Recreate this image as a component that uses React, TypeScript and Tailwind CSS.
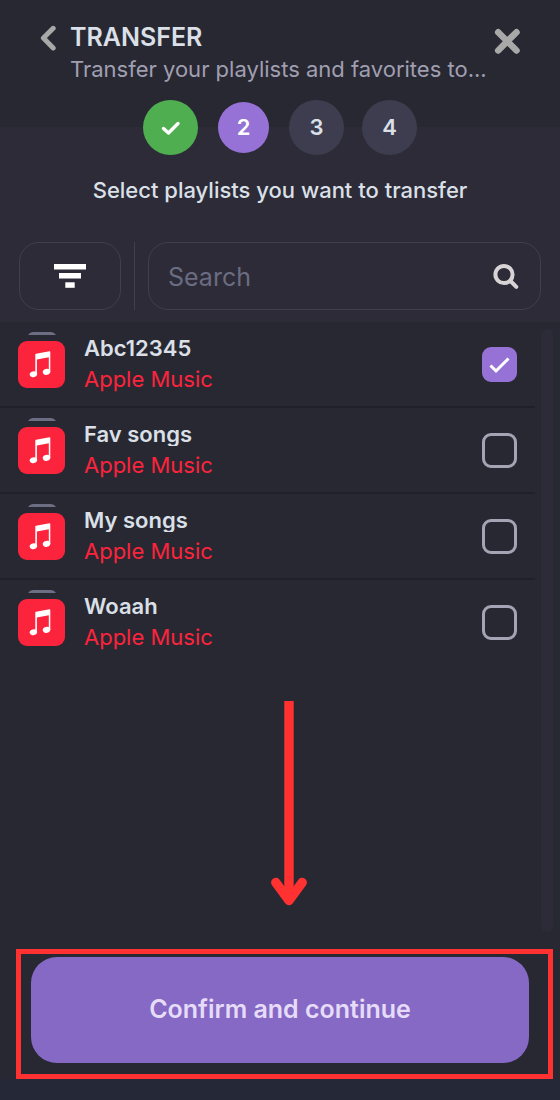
import { useState } from "react";

interface Playlist {
  id: number;
  name: string;
  source: string;
}

const playlists: Playlist[] = [
  { id: 1, name: "Abc12345", source: "Apple Music" },
  { id: 2, name: "Fav songs", source: "Apple Music" },
  { id: 3, name: "My songs", source: "Apple Music" },
  { id: 4, name: "Woaah", source: "Apple Music" },
];

function AppleMusicIcon() {
  return (
    <div className="flex w-[47px] shrink-0 flex-col items-center gap-[6px] pt-[10px]">
      <svg width="28" height="3" viewBox="0 0 28 3" aria-hidden="true">
        <path d="M0 3 Q2 0 5 0 H23 Q26 0 28 3 Z" fill="#6c6e84" />
      </svg>
      <svg width="47" height="47" viewBox="0 0 47 47" aria-hidden="true">
        <rect width="47" height="47" rx="9" fill="#fc243c" />
        <path
          d="M17.3 13.8 Q17.3 13 18.1 12.8 L31.4 10.2 Q32.3 10.1 32.3 11 V31 H30.8 V16.2 L18.9 18.6 V33.4 H17.3 Z"
          fill="#fff"
        />
        <ellipse cx="15.4" cy="33.2" rx="3.8" ry="2.9" transform="rotate(-14 15.4 33.2)" fill="#fff" />
        <ellipse cx="28.5" cy="30.9" rx="3.8" ry="2.9" transform="rotate(-14 28.5 30.9)" fill="#fff" />
      </svg>
    </div>
  );
}

interface PlaylistRowProps {
  playlist: Playlist;
  checked: boolean;
  last: boolean;
  onToggle: () => void;
}

function PlaylistRow({ playlist, checked, last, onToggle }: PlaylistRowProps) {
  return (
    <li className={last ? "h-[85px]" : "h-[86px] border-b-2 border-[#20202a]"}>
      <label className="flex cursor-pointer pr-[18px] pl-[18px]">
        <AppleMusicIcon />
        <div className="ml-[19px] min-w-0 flex-1 pt-[14px] text-[22px] leading-6">
          <p className="overflow-hidden font-semibold text-[#dbe0e8]">{playlist.name}</p>
          <p className="mt-[7px] text-[#fc243c]">{playlist.source}</p>
        </div>
        <div className="relative mt-[25px] h-[35px] w-[35px] shrink-0">
          <input
            type="checkbox"
            checked={checked}
            onChange={onToggle}
            className="peer block h-full w-full cursor-pointer appearance-none rounded-[9px] border-3 border-[#a5a4b4] checked:border-[#9672d6] checked:bg-[#9672d6]"
          />
          <svg
            viewBox="0 0 35 35"
            className="pointer-events-none absolute inset-0 hidden peer-checked:block"
            aria-hidden="true"
          >
            <path d="M8.5 18.5 L14 24 L26.5 11.5" fill="none" stroke="#fff" strokeWidth="3" />
          </svg>
        </div>
      </label>
    </li>
  );
}

export default function App() {
  const [selected, setSelected] = useState<number[]>([1]);
  const [search, setSearch] = useState("");

  const toggle = (id: number) => {
    setSelected((prev) =>
      prev.includes(id) ? prev.filter((item) => item !== id) : [...prev, id]
    );
  };

  const visible = playlists.filter((p) =>
    p.name.toLowerCase().includes(search.toLowerCase())
  );

  return (
    <div className="flex min-h-screen flex-col bg-[#282832] font-['Inter',sans-serif] text-[#dbe0e8]">
      {/* HEADER */}
      <header className="flex h-[127px] items-start px-[39px]">
        <button type="button" aria-label="Back" className="mt-[25px] shrink-0">
          <svg width="18" height="26" viewBox="0 0 18 26" aria-hidden="true">
            <path
              d="M14.2 3.3 L4.4 13 L14.2 22.9"
              fill="none"
              stroke="#a8a8a8"
              strokeWidth="5"
              strokeLinecap="round"
              strokeLinejoin="round"
            />
          </svg>
        </button>
        <div className="ml-[13px] min-w-0 flex-1 pt-[21px]">
          <h1 className="text-[25px] leading-8 font-semibold">TRANSFER</h1>
          <p className="text-[22px] leading-8 whitespace-nowrap text-[#a09fb1]">
            Transfer your playlists and favorites to...
          </p>
        </div>
        <button type="button" aria-label="Close" className="mt-7 shrink-0">
          <svg width="27" height="26" viewBox="0 0 27 26" aria-hidden="true">
            <path
              d="M4.2 4.2 L22.5 22.5 M22.5 4.2 L4.2 22.5"
              fill="none"
              stroke="#a8a8a8"
              strokeWidth="6.5"
              strokeLinecap="round"
            />
          </svg>
        </button>
      </header>

      <section className="bg-[#2c2b37] px-[19px] pb-3">
        {/* STEPS */}
        <ol className="-mt-[27px] flex items-center justify-center gap-[18px] text-[22px] font-semibold">
          <li className="flex h-[55px] w-[55px] items-center justify-center rounded-full bg-[#4fae50]">
            <svg width="20" height="16" viewBox="0 0 20 16" role="img" aria-label="Step 1 done">
              <path
                d="M2.5 8.5 L7.5 13 L17 3.5"
                fill="none"
                stroke="#fff"
                strokeWidth="3.4"
                strokeLinecap="round"
                strokeLinejoin="round"
              />
            </svg>
          </li>
          <li className="flex w-[55px] justify-center">
            <span className="flex h-[51px] w-[51px] items-center justify-center rounded-full bg-[#9672d6] text-white">
              2
            </span>
          </li>
          <li className="flex h-[55px] w-[55px] items-center justify-center rounded-full bg-[#3d3d4f]">3</li>
          <li className="flex h-[55px] w-[55px] items-center justify-center rounded-full bg-[#3d3d4f]">4</li>
        </ol>

        <h2 className="mt-[19px] text-center text-[22px] leading-8 font-medium">
          Select playlists you want to transfer
        </h2>

        {/* FILTER + SEARCH */}
        <div className="mt-9 flex h-[68px]">
          <button
            type="button"
            aria-label="Filter"
            className="flex w-[102px] shrink-0 items-center justify-center rounded-[20px] border border-[#3f3f51]"
          >
            <svg width="32" height="26" viewBox="0 0 32 26" fill="#fff" aria-hidden="true">
              <rect x="0" y="1" width="32" height="5.5" />
              <rect x="5" y="10" width="22" height="5.5" />
              <rect x="11.3" y="19.3" width="9.4" height="5.5" />
            </svg>
          </button>
          <div className="mx-[13px] w-px shrink-0 bg-[#3f3f51]" />
          <label className="flex min-w-0 flex-1 items-center rounded-[20px] border border-[#3f3f51] pr-5 pl-[19px]">
            <input
              type="text"
              aria-label="Search"
              placeholder="Search"
              value={search}
              onChange={(e) => setSearch(e.target.value)}
              className="min-w-0 flex-1 bg-transparent pt-[3px] text-[25px] outline-none placeholder:text-[#6a6c81]"
            />
            <svg width="28" height="28" viewBox="0 0 28 28" aria-hidden="true">
              <circle cx="12" cy="12.5" r="8.6" fill="none" stroke="#d8d4d6" strokeWidth="4" />
              <path d="M18.5 19 L24.3 24.8" stroke="#d8d4d6" strokeWidth="4" strokeLinecap="round" />
            </svg>
          </label>
        </div>
      </section>

      {/* PLAYLISTS */}
      <main className="flex flex-1 gap-[6px] pr-[7px]">
        <div className="min-w-0 flex-1">
          <ul>
            {visible.map((playlist, index) => (
              <PlaylistRow
                key={playlist.id}
                playlist={playlist}
                checked={selected.includes(playlist.id)}
                last={index === playlists.length - 1}
                onToggle={() => toggle(playlist.id)}
              />
            ))}
          </ul>
          <div className="mt-[35px] flex justify-center pl-[43px]">
            <svg width="38" height="206" viewBox="0 0 38 206" aria-hidden="true">
              <path d="M19 1 V196" stroke="#ff3131" strokeWidth="9.4" />
              <path
                d="M5.8 182.5 L19 200.5 L32.2 182.5"
                fill="none"
                stroke="#ff3131"
                strokeWidth="9.4"
                strokeLinecap="round"
                strokeLinejoin="round"
              />
            </svg>
          </div>
        </div>
        <div className="mt-[7px] mb-[17px] w-3 shrink-0 rounded-full bg-[#2c2b37]" />
      </main>

      {/* CONFIRM */}
      <footer className="border-b-21 border-[#252836] pr-[7px] pl-4">
        <div className="border-5 border-[#ff3131] pt-[3px] pr-[19px] pb-[11px] pl-[10px]">
          <button
            type="button"
            className="h-[106px] w-full rounded-[26px] bg-[#8569c5] text-[25px] font-semibold text-[#e6dcf8]"
          >
            Confirm and continue
          </button>
        </div>
      </footer>
    </div>
  );
}
